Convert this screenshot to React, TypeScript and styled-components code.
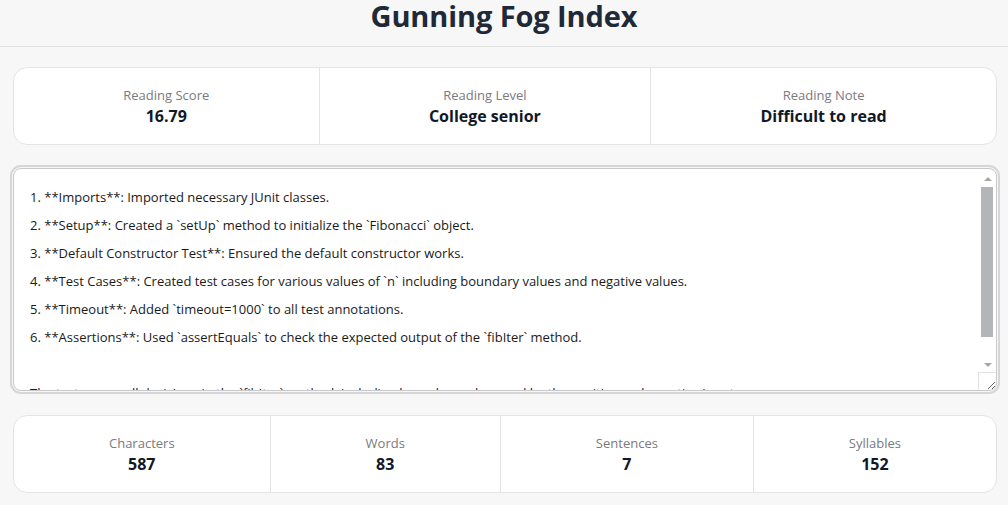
import React from "react";
import styled, { createGlobalStyle } from "styled-components";

const GlobalStyle = createGlobalStyle`
  html, body {
    margin: 0;
    padding: 0;
    background: #f7f7f7;
    font-family: "Open Sans", "Noto Sans", sans-serif;
  }
  * { box-sizing: border-box; }
`;

const Page = styled.div`
  display: flex;
  flex-direction: column;
`;

const Header = styled.header`
  height: 47px;
  border-bottom: 1px solid #e2e2e2;
  display: flex;
  align-items: flex-start;
  justify-content: center;
`;

const Title = styled.h1`
  margin: 0;
  font-size: 29px;
  font-weight: 700;
  color: #1f2937;
  letter-spacing: -0.1px;
  line-height: 34px;
  margin-top: -1px;
`;

const Main = styled.main`
  display: flex;
  flex-direction: column;
  padding: 20px 11px 0 13px;
  gap: 23px;
`;

const Card = styled.section`
  display: flex;
  background: #ffffff;
  border: 1px solid #e4e4e4;
  border-radius: 14px;
  height: 78px;
`;

const Stat = styled.div`
  flex: 1 1 auto;
  display: flex;
  flex-direction: column;
  align-items: center;
  justify-content: center;
  gap: 2px;
  & + & {
    border-left: 1px solid #e4e4e4;
  }
`;

const Label = styled.div`
  font-size: 13px;
  color: #7a7a82;
  line-height: 18px;
`;

const Value = styled.div`
  font-size: 16px;
  font-weight: 700;
  color: #111827;
  line-height: 21px;
`;

const EditorWrap = styled.div`
  position: relative;
  margin-bottom: 1px;
`;

const Editor = styled.textarea`
  display: block;
  width: 100%;
  height: 223px;
  margin: 0;
  padding: 14px 30px 10px 16px;
  border: 1px solid #c9c9cc;
  border-radius: 8px;
  outline: 2px solid #d6d6d9;
  outline-offset: 1px;
  background: #ffffff;
  font-family: "Open Sans", "Noto Sans", sans-serif;
  font-size: 13px;
  line-height: 28px;
  color: #1a1a1a;
  resize: vertical;
  overflow: hidden;
`;

const ScrollBar = styled.div`
  position: absolute;
  top: 2px;
  right: 1px;
  bottom: 18px;
  width: 17px;
  display: flex;
  flex-direction: column;
  align-items: center;
  pointer-events: none;
`;

const ArrowBox = styled.div`
  height: 17px;
  width: 17px;
  display: flex;
  align-items: center;
  justify-content: center;
`;

const Arrow = styled.div<{ $dir: "up" | "down" }>`
  width: 0;
  height: 0;
  border-left: 4px solid transparent;
  border-right: 4px solid transparent;
  ${(p) =>
    p.$dir === "up"
      ? "border-bottom: 4px solid #a8a8a8;"
      : "border-top: 4px solid #a8a8a8;"}
`;

const Thumb = styled.div`
  width: 12px;
  height: 150px;
  margin-left: -1px;
  background: #b3b5b9;
`;

const Spacer = styled.div`
  flex: 1;
`;

const Corner = styled.div`
  position: absolute;
  right: 1px;
  bottom: 1px;
  width: 18px;
  height: 18px;
  border-left: 1px solid #e2e2e4;
  border-top: 1px solid #e2e2e4;
  pointer-events: none;
`;

const text = `1. **Imports**: Imported necessary JUnit classes.
2. **Setup**: Created a \`setUp\` method to initialize the \`Fibonacci\` object.
3. **Default Constructor Test**: Ensured the default constructor works.
4. **Test Cases**: Created test cases for various values of \`n\` including boundary values and negative values.
5. **Timeout**: Added \`timeout=1000\` to all test annotations.
6. **Assertions**: Used \`assertEquals\` to check the expected output of the \`fibIter\` method.

The test covers all decisions in the \`fibIter\` method, including boundary values and by the positive and negative inputs.
`;

type StatItem = { label: string; value: string };

const reading: StatItem[] = [
  { label: "Reading Score", value: "16.79" },
  { label: "Reading Level", value: "College senior" },
  { label: "Reading Note", value: "Difficult to read" },
];

const counts: StatItem[] = [
  { label: "Characters", value: "587" },
  { label: "Words", value: "83" },
  { label: "Sentences", value: "7" },
  { label: "Syllables", value: "152" },
];

const StatCard = ({ items }: { items: StatItem[] }) => (
  <Card>
    {items.map((it) => (
      <Stat key={it.label}>
        <Label>{it.label}</Label>
        <Value>{it.value}</Value>
      </Stat>
    ))}
  </Card>
);

export default function App() {
  return (
    <Page>
      <GlobalStyle />
      <Header>
        <Title>Gunning Fog Index</Title>
      </Header>
      <Main>
        <StatCard items={reading} />
        <EditorWrap>
          <Editor defaultValue={text} spellCheck={false} />
          <ScrollBar aria-hidden>
            <ArrowBox>
              <Arrow $dir="up" />
            </ArrowBox>
            <Thumb />
            <Spacer />
            <ArrowBox>
              <Arrow $dir="down" />
            </ArrowBox>
          </ScrollBar>
          <Corner />
        </EditorWrap>
        <StatCard items={counts} />
      </Main>
    </Page>
  );
}
